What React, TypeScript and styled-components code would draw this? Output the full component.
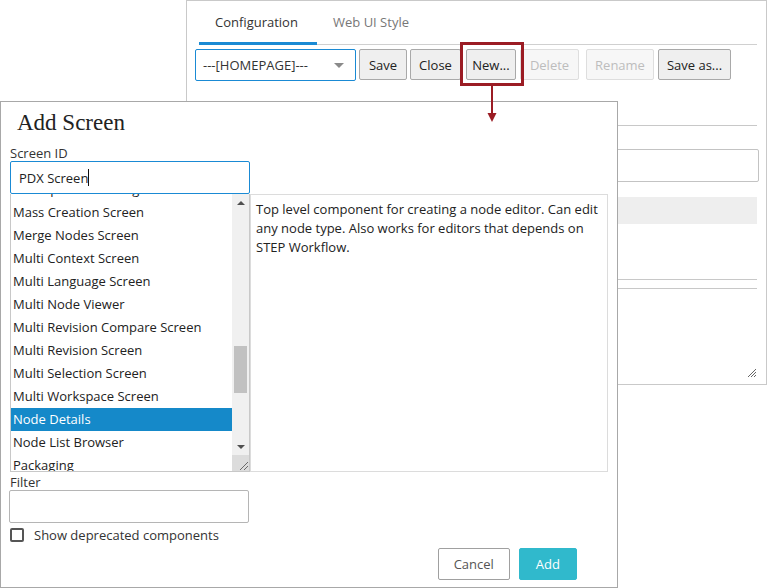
import React, { useLayoutEffect, useRef } from 'react'
import styled, { createGlobalStyle, css } from 'styled-components'

const UI_FONT = `'Open Sans', 'Noto Sans', sans-serif`

const GlobalStyle = createGlobalStyle`
  html, body {
    margin: 0;
    padding: 0;
    background: #ffffff;
  }
  body {
    font-family: ${UI_FONT};
    font-size: 12.5px;
    color: #333333;
  }
  * {
    box-sizing: border-box;
  }
`

const Canvas = styled.div`
  position: relative;
  width: 767px;
  height: 588px;
  overflow: hidden;
`

/* ---------- background editor window ---------- */

const EditorWindow = styled.div`
  position: absolute;
  left: 186px;
  top: 0;
  width: 581px;
  height: 385px;
  border: 1px solid #c9c9c9;
  background: #ffffff;
  padding: 0 9px 0 8px;
  display: flex;
  flex-direction: column;
`
const TabBar = styled.div`
  display: flex;
  margin: 0 0 0 4px;
  border-bottom: 1px solid #d0d0d0;
  height: 44px;
`
const Tab = styled.div<{ $active?: boolean }>`
  padding: 12px 16px 0;
  font-size: 13px;
  color: ${({ $active }) => ($active ? '#333' : '#777')};
  border-bottom: 3px solid ${({ $active }) => ($active ? '#1a8ad4' : 'transparent')};
  margin-bottom: -1px;
  width: ${({ $active }) => ($active ? '118px' : 'auto')};
`
const Toolbar = styled.div`
  display: flex;
  margin-top: 4px;
  height: 32px;
  align-items: stretch;
`
const Select = styled.div`
  width: 161px;
  border: 1px solid #1a8ad4;
  border-radius: 2px;
  display: flex;
  align-items: center;
  justify-content: space-between;
  padding: 0 11px 0 7px;
  font-size: 13px;
  color: #333;
  &::after {
    content: '';
    border-left: 5px solid transparent;
    border-right: 5px solid transparent;
    border-top: 5px solid #8a8a8a;
  }
`
const buttonBase = css`
  font-family: ${UI_FONT};
  font-size: 13px;
  height: 31px;
  border-radius: 2px;
  padding: 0;
  cursor: pointer;
`
const ToolButton = styled.button<{ $disabled?: boolean; $width: number; $gap: number }>`
  ${buttonBase}
  width: ${({ $width }) => $width}px;
  margin-left: ${({ $gap }) => $gap}px;
  background: ${({ $disabled }) => ($disabled ? '#f7f7f7' : '#efefef')};
  border: 1px solid ${({ $disabled }) => ($disabled ? '#dedede' : '#a9a9a9')};
  color: ${({ $disabled }) => ($disabled ? '#bdbdbd' : '#222')};
`
const Rule = styled.div<{ $top: number }>`
  margin-top: ${({ $top }) => $top}px;
  border-top: 1px solid #c8c8c8;
`
const GhostInput = styled.div`
  margin-top: 23px;
  height: 33px;
  width: 564px;
  border: 1px solid #c3c3c3;
  border-radius: 2px;
`
const GhostRow = styled.div`
  margin-top: 15px;
  height: 27px;
  background: #eeeeee;
`
const GhostArea = styled.div`
  margin-top: 8px;
  flex: 1;
  border-top: 1px solid #c8c8c8;
  position: relative;
  margin-bottom: 6px;
`
const Grip = styled.svg`
  position: absolute;
  right: 0;
  bottom: 0;
`

/* ---------- annotation ---------- */

const Highlight = styled.div`
  position: absolute;
  left: 460px;
  top: 42px;
  width: 64px;
  height: 44px;
  border: 3px solid #9b1c24;
`
const Arrow = styled.svg`
  position: absolute;
  left: 486px;
  top: 85px;
`

/* ---------- Add Screen dialog ---------- */

const Dialog = styled.div`
  position: absolute;
  left: 0;
  top: 101px;
  width: 618px;
  height: 487px;
  background: #ffffff;
  border: 1px solid #a8a8a8;
  padding: 0 9px 0 8px;
  display: flex;
  flex-direction: column;
`
const Title = styled.h2`
  margin: 7px 0 0 8px;
  font-family: 'Liberation Serif', 'DejaVu Serif', serif;
  font-weight: normal;
  font-size: 23px;
  line-height: 28px;
  color: #222;
`
const FieldLabel = styled.label<{ $gap: number }>`
  display: block;
  margin: ${({ $gap }) => $gap}px 0 0 1px;
  font-size: 13px;
  line-height: 16px;
  color: #333;
`
const TextBox = styled.div<{ $focused?: boolean }>`
  width: 240px;
  height: 33px;
  margin-left: ${({ $focused }) => ($focused ? '1px' : '0')};
  border: 1px solid ${({ $focused }) => ($focused ? '#1a8ad4' : '#b5b5b5')};
  border-radius: 2px;
  padding: 0 8px;
  display: flex;
  align-items: center;
  font-size: 13px;
  color: #222;
`
const Caret = styled.span`
  display: inline-block;
  width: 1px;
  height: 17px;
  background: #111;
`
const PickerRow = styled.div`
  display: flex;
  height: 278px;
  margin-left: 1px;
`
const ListBox = styled.div`
  width: 240px;
  display: flex;
  border: 1px solid #c8c8c8;
  border-top: none;
`
const ListItems = styled.div`
  flex: 1;
  overflow: hidden;
`
const ListItem = styled.div<{ $selected?: boolean }>`
  height: 23px;
  line-height: 23px;
  padding-left: 2px;
  font-size: 13px;
  white-space: nowrap;
  background: ${({ $selected }) => ($selected ? '#1589c9' : 'transparent')};
  color: ${({ $selected }) => ($selected ? '#ffffff' : '#222')};
`
const ScrollTrack = styled.div`
  width: 17px;
  background: #f0f0f0;
  display: flex;
  flex-direction: column;
  align-items: center;
`
const ScrollArrow = styled.div<{ $up?: boolean }>`
  height: 17px;
  width: 17px;
  display: flex;
  align-items: center;
  justify-content: center;
  &::after {
    content: '';
    border-left: 4px solid transparent;
    border-right: 4px solid transparent;
    ${({ $up }) => ($up ? 'border-bottom: 4px solid #505050;' : 'border-top: 4px solid #505050;')}
  }
`
const ScrollLane = styled.div`
  flex: 1;
  width: 100%;
  position: relative;
`
const ScrollThumb = styled.div`
  position: absolute;
  left: 2px;
  right: 2px;
  background: #c1c1c1;
`
const ResizeCorner = styled.div`
  height: 16px;
  width: 17px;
  background: #dcdcdc;
  display: flex;
  align-items: flex-end;
  justify-content: flex-end;
`
const Description = styled.div`
  flex: 1;
  border: 1px solid #dcdcdc;
  padding: 5px 5px;
  font-size: 13px;
  line-height: 19px;
  color: #222;
`
const CheckRow = styled.label`
  display: flex;
  align-items: center;
  gap: 10px;
  margin: 3px 0 0 1px;
  font-size: 13px;
  color: #333;
`
const CheckBox = styled.span`
  width: 14px;
  height: 14px;
  border: 2px solid #555;
  border-radius: 2px;
`
const Footer = styled.div`
  display: flex;
  justify-content: flex-end;
  gap: 9px;
  margin: 4px 31px 0 0;
`
const DialogButton = styled.button<{ $primary?: boolean }>`
  ${buttonBase}
  height: 32px;
  padding: 0 ${({ $primary }) => ($primary ? '16px' : '15px')};
  background: ${({ $primary }) => ($primary ? '#30b9cc' : '#ffffff')};
  border: 1px solid ${({ $primary }) => ($primary ? '#30b9cc' : '#a0a0a0')};
  color: ${({ $primary }) => ($primary ? '#ffffff' : '#555')};
`

const components = [
  'Global Navigation Panel',
  'Home Page',
  'Import Manager Screen',
  'Initiate Items Screen',
  'Item Selection Screen',
  'Link Viewer Screen',
  'List Screen',
  'Lookup Table Editing',
  'Mass Creation Screen',
  'Merge Nodes Screen',
  'Multi Context Screen',
  'Multi Language Screen',
  'Multi Node Viewer',
  'Multi Revision Compare Screen',
  'Multi Revision Screen',
  'Multi Selection Screen',
  'Multi Workspace Screen',
  'Node Details',
  'Node List Browser',
  'Packaging',
  'Product Overview',
  'Search Screen',
]

const selected = 'Node Details'

const toolButtons = [
  { label: 'Save', width: 48, gap: 3 },
  { label: 'Close', width: 51, gap: 3 },
  { label: 'New...', width: 50, gap: 5 },
  { label: 'Delete', width: 59, gap: 4, disabled: true },
  { label: 'Rename', width: 68, gap: 7, disabled: true },
  { label: 'Save as...', width: 73, gap: 4 },
]

function GripIcon({ color = '#777' }: { color?: string }) {
  return (
    <svg width="11" height="11" viewBox="0 0 11 11">
      <path d="M10 2 L2 10 M10 6 L6 10" stroke={color} strokeWidth="1" fill="none" />
    </svg>
  )
}

function ComponentList() {
  const ref = useRef<HTMLDivElement>(null)
  useLayoutEffect(() => {
    // list is scrolled so that "Mass Creation Screen" sits just under the top edge
    if (ref.current) ref.current.scrollTop = 8 * 23 - 7
  }, [])

  return (
    <ListBox>
      <ListItems ref={ref}>
        {components.map((name) => (
          <ListItem key={name} $selected={name === selected}>
            {name}
          </ListItem>
        ))}
      </ListItems>
      <ScrollTrack>
        <ScrollArrow $up />
        <ScrollLane>
          <ScrollThumb style={{ top: 135, height: 47 }} />
        </ScrollLane>
        <ScrollArrow />
        <ResizeCorner>
          <GripIcon color="#6a6a6a" />
        </ResizeCorner>
      </ScrollTrack>
    </ListBox>
  )
}

export default function App() {
  return (
    <Canvas>
      <GlobalStyle />
      <EditorWindow>
        <TabBar>
          <Tab $active>Configuration</Tab>
          <Tab>Web UI Style</Tab>
        </TabBar>
        <Toolbar>
          <Select>---[HOMEPAGE]---</Select>
          {toolButtons.map((b) => (
            <ToolButton key={b.label} $width={b.width} $gap={b.gap} $disabled={b.disabled}>
              {b.label}
            </ToolButton>
          ))}
        </Toolbar>
        <Rule $top={44} />
        <GhostInput />
        <GhostRow />
        <Rule $top={55} />
        <GhostArea>
          <Grip width="12" height="12" viewBox="0 0 12 12">
            <path d="M11 3 L3 11 M11 6 L6 11 M11 9 L9 11" stroke="#666" strokeWidth="1" fill="none" />
          </Grip>
        </GhostArea>
      </EditorWindow>

      <Dialog>
        <Title>Add Screen</Title>
        <FieldLabel $gap={8}>Screen ID</FieldLabel>
        <TextBox $focused>
          PDX Screen
          <Caret />
        </TextBox>
        <PickerRow>
          <ComponentList />
          <Description>
            Top level component for creating a node editor. Can edit any node type. Also works for
            editors that depends on STEP Workflow.
          </Description>
        </PickerRow>
        <FieldLabel $gap={2}>Filter</FieldLabel>
        <TextBox />
        <CheckRow>
          <CheckBox />
          Show deprecated components
        </CheckRow>
        <Footer>
          <DialogButton>Cancel</DialogButton>
          <DialogButton $primary>Add</DialogButton>
        </Footer>
      </Dialog>

      <Highlight />
      <Arrow width="12" height="38" viewBox="0 0 12 38">
        <line x1="6" y1="0" x2="6" y2="29" stroke="#9b1c24" strokeWidth="2" />
        <path d="M1.5 28 L10.5 28 L6 37 Z" fill="#9b1c24" />
      </Arrow>
    </Canvas>
  )
}
